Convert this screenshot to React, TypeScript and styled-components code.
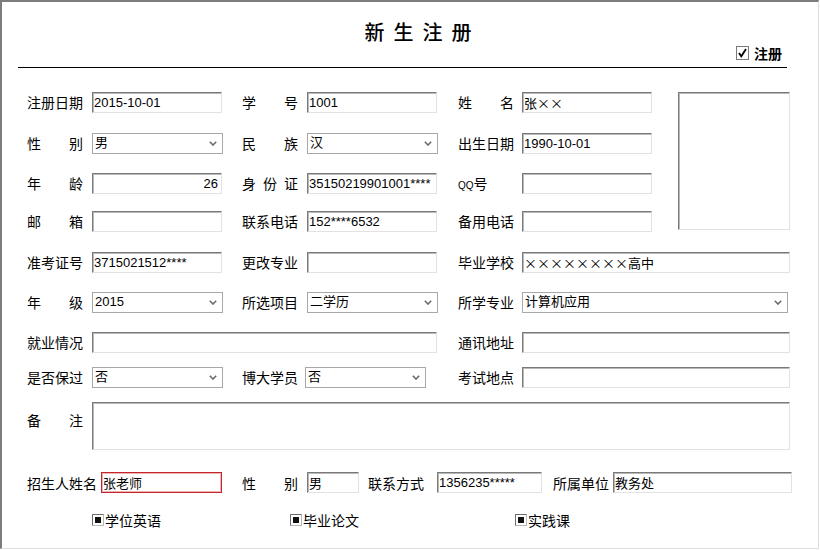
import React from "react"
import styled, { createGlobalStyle } from "styled-components"

const GlobalStyle = createGlobalStyle`
  html, body {
    margin: 0;
    padding: 0;
    background: #ffffff;
  }
  body {
    font-family: "Noto Sans CJK SC", "Liberation Sans", sans-serif;
    color: #000;
  }
`

const Frame = styled.div`
  box-sizing: border-box;
  width: 819px;
  height: 549px;
  border-style: solid;
  border-width: 2px 1px 1px 2px;
  border-color: #7d7d7d #dedede #dedede #7d7d7d;
  overflow: hidden;
`

const Header = styled.header`
  width: 769px;
  margin-left: 16px;
  padding-top: 20px;
  border-bottom: 1px solid #000;
  height: 45px;
`

const Title = styled.h1`
  margin: 0;
  padding-left: 40px;
  text-align: center;
  font-size: 20px;
  line-height: 20px;
  font-weight: 500;
  letter-spacing: 9px;
`

const HeaderTools = styled.div`
  display: flex;
  justify-content: flex-end;
  align-items: center;
  gap: 5px;
  margin-top: 3px;
  padding-right: 5px;
  font-size: 14px;
  line-height: 16px;
  font-weight: 700;
`

const FormGrid = styled.div`
  display: grid;
  margin: 24px 0 0 25px;
  grid-template-columns: 65px 150px 65px 151px 64px 156px 112px;
  grid-template-rows: 41px 40px 38px 41px 40px 40px 35px 35px 48px;
  align-items: start;
`

const LabelBox = styled.label<{ $width?: number; $top?: number }>`
  display: flex;
  justify-content: space-between;
  width: ${(p) => p.$width ?? 56}px;
  height: 20px;
  margin-top: ${(p) => p.$top ?? 0}px;
  font-size: 14px;
  line-height: 20px;
  white-space: nowrap;
`

const PlainLabel = styled.label`
  display: flex;
  align-items: baseline;
  height: 20px;
  font-size: 14px;
  line-height: 20px;
`

const Small = styled.span`
  font-size: 10px;
  font-family: "Liberation Sans", sans-serif;
`

const Field = styled.input<{ $width?: number; $align?: string; $warn?: boolean; $cjk?: boolean }>`
  box-sizing: border-box;
  display: block;
  width: ${(p) => p.$width ?? 130}px;
  height: 21px;
  margin: 0;
  padding: 0 ${(p) => (p.$align === "right" ? 3 : 1)}px 0 1px;
  border: 1px solid;
  border-color: ${(p) =>
    p.$warn ? "#c4262b" : "#7a7a7a #e2e2e2 #e2e2e2 #7a7a7a"};
  box-shadow: ${(p) =>
    p.$warn ? "inset 0 0 0 1px rgba(196, 38, 43, 0.35)" : "inset 1px 1px 0 #b8b8b8"};
  background: #fff;
  font-family: ${(p) =>
    p.$cjk
      ? `"Noto Sans CJK SC", sans-serif`
      : `"Liberation Sans", "Noto Sans CJK SC", sans-serif`};
  font-feature-settings: ${(p) => (p.$cjk ? `"fwid" 1` : "normal")};
  font-size: 13px;
  line-height: 19px;
  color: #000;
  text-align: ${(p) => p.$align ?? "left"};
  outline: none;
`

const WideCell = styled.div<{ $span: string }>`
  grid-column: ${(p) => p.$span};
`

const Memo = styled.textarea`
  box-sizing: border-box;
  display: block;
  width: 698px;
  height: 48px;
  margin: 0;
  padding: 1px;
  resize: none;
  border: 1px solid;
  border-color: #7a7a7a #e2e2e2 #e2e2e2 #7a7a7a;
  box-shadow: inset 1px 1px 0 #b8b8b8;
  font-family: "Liberation Sans", "Noto Sans CJK SC", sans-serif;
  font-size: 13px;
  outline: none;
`

const Photo = styled.div`
  grid-column: 7;
  grid-row: 1 / 5;
  box-sizing: border-box;
  width: 112px;
  height: 138px;
  border: 1px solid;
  border-color: #7a7a7a #e2e2e2 #e2e2e2 #7a7a7a;
  box-shadow: inset 1px 1px 0 #b8b8b8;
`

const DropDown = styled.div<{ $width?: number; $shift?: number }>`
  box-sizing: border-box;
  display: flex;
  align-items: flex-start;
  justify-content: space-between;
  width: ${(p) => p.$width ?? 131}px;
  height: 21px;
  margin-left: ${(p) => p.$shift ?? 0}px;
  padding: 0 5px 0 2px;
  border: 1px solid #a8a8a8;
  background: #fff;
  font-family: "Liberation Sans", "Noto Sans CJK SC", sans-serif;
  font-size: 13px;
  line-height: 17px;
  cursor: default;
`

const DropValue = styled.span`
  white-space: nowrap;
`

const Chevron = styled.svg`
  flex: none;
  margin-top: 7px;
`

const BottomRow = styled.div`
  display: flex;
  align-items: center;
  margin: 22px 0 0 25px;
  height: 21px;
`

const Spacer = styled.span<{ $w: number }>`
  flex: 0 0 ${(p) => p.$w}px;
`

const CheckRow = styled.div`
  display: grid;
  grid-template-columns: 198px 225px auto;
  margin: 19px 0 0 90px;
  height: 16px;
`

const CheckItem = styled.label`
  display: flex;
  align-items: center;
  gap: 1px;
  font-size: 14px;
  line-height: 16px;
`

const MarkBox = styled.span`
  box-sizing: border-box;
  display: inline-flex;
  align-items: center;
  justify-content: center;
  width: 12px;
  height: 12px;
  border: 1px solid;
  border-color: #6e6e6e #b9b9b9 #b9b9b9 #6e6e6e;
  background: #fff;
  &::after {
    content: "";
    width: 6px;
    height: 6px;
    background: #111;
  }
`

const Label = ({ text, width, top }: { text: string; width?: number; top?: number }) => (
  <LabelBox $width={width} $top={top}>
    {text.split("").map((c, i) => (
      <span key={i}>{c}</span>
    ))}
  </LabelBox>
)

const Select = ({ value, width, shift }: { value: string; width?: number; shift?: number }) => (
  <DropDown role="combobox" aria-expanded={false} $width={width} $shift={shift}>
    <DropValue>{value}</DropValue>
    <Chevron width="8" height="5" viewBox="0 0 8 5">
      <path d="M0.8 0.8 L4 4 L7.2 0.8" fill="none" stroke="#6a6a6a" strokeWidth="1.6" />
    </Chevron>
  </DropDown>
)

const CheckIcon = () => (
  <svg width="13" height="14" viewBox="0 0 13 14">
    <rect x="0.5" y="0.5" width="12" height="13" fill="#fff" stroke="#7a7a7a" />
    <path d="M3 7 L5.3 10.3 L10 3" fill="none" stroke="#000" strokeWidth="1.8" />
  </svg>
)

export default function App() {
  return (
    <>
      <GlobalStyle />
      <Frame>
        <Header>
          <Title>新生注册</Title>
          <HeaderTools>
            <CheckIcon />
            <span>注册</span>
          </HeaderTools>
        </Header>

        <FormGrid>
          <Label text="注册日期" />
          <Field defaultValue="2015-10-01" />
          <Label text="学号" />
          <Field defaultValue="1001" />
          <Label text="姓名" />
          <Field defaultValue="张××" $cjk />
          <Photo />

          <Label text="性别" />
          <Select value="男" />
          <Label text="民族" />
          <Select value="汉" />
          <Label text="出生日期" />
          <Field defaultValue="1990-10-01" />

          <Label text="年龄" />
          <Field defaultValue="26" $align="right" />
          <Label text="身份证" />
          <Field defaultValue="35150219901001****" />
          <PlainLabel>
            <Small>QQ</Small>号
          </PlainLabel>
          <Field defaultValue="" />

          <Label text="邮箱" />
          <Field defaultValue="" />
          <Label text="联系电话" />
          <Field defaultValue="152****6532" />
          <Label text="备用电话" />
          <Field defaultValue="" />

          <Label text="准考证号" />
          <Field defaultValue="3715021512****" />
          <Label text="更改专业" />
          <Field defaultValue="" />
          <Label text="毕业学校" />
          <WideCell $span="6 / 8">
            <Field defaultValue="××××××××高中" $width={268} $cjk />
          </WideCell>

          <Label text="年级" />
          <Select value="2015" />
          <Label text="所选项目" />
          <Select value="二学历" />
          <Label text="所学专业" />
          <WideCell $span="6 / 8">
            <Select value="计算机应用" width={266} />
          </WideCell>

          <Label text="就业情况" />
          <WideCell $span="2 / 5">
            <Field defaultValue="" $width={345} />
          </WideCell>
          <Label text="通讯地址" />
          <WideCell $span="6 / 8">
            <Field defaultValue="" $width={268} />
          </WideCell>

          <Label text="是否保过" />
          <Select value="否" />
          <Label text="博大学员" />
          <Select value="否" width={121} shift={-2} />
          <Label text="考试地点" />
          <WideCell $span="6 / 8">
            <Field defaultValue="" $width={268} />
          </WideCell>

          <Label text="备注" top={8} />
          <WideCell $span="2 / 8">
            <Memo defaultValue="" />
          </WideCell>
        </FormGrid>

        <BottomRow>
          <Label text="招生人姓名" width={70} />
          <Spacer $w={4} />
          <Field defaultValue="张老师" $width={121} $warn />
          <Spacer $w={20} />
          <Label text="性别" />
          <Spacer $w={9} />
          <Field defaultValue="男" $width={52} />
          <Spacer $w={9} />
          <Label text="联系方式" />
          <Spacer $w={13} />
          <Field defaultValue="1356235*****" $width={105} />
          <Spacer $w={11} />
          <Label text="所属单位" />
          <Spacer $w={4} />
          <Field defaultValue="教务处" $width={179} />
        </BottomRow>

        <CheckRow>
          <CheckItem>
            <MarkBox />
            学位英语
          </CheckItem>
          <CheckItem>
            <MarkBox />
            毕业论文
          </CheckItem>
          <CheckItem>
            <MarkBox />
            实践课
          </CheckItem>
        </CheckRow>
      </Frame>
    </>
  )
}
